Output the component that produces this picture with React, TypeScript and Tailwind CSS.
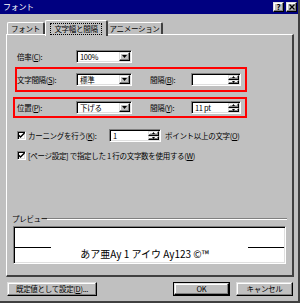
import React from "react";

const sunken =
  "border border-t-[#808080] border-l-[#808080] border-b-white border-r-white shadow-[inset_1px_1px_0_#000,inset_-1px_-1px_0_#dfdfdf]";
const raised =
  "border border-t-[#dfdfdf] border-l-[#dfdfdf] border-b-black border-r-black shadow-[inset_-1px_-1px_0_#808080,inset_1px_1px_0_#fff]";

function Arrow() {
  return (
    <svg width="5" height="3" viewBox="0 0 5 3">
      <path d="M0 0h5L2.5 3z" fill="#000" />
    </svg>
  );
}

function Dropdown({ value }: { value: string }) {
  return (
    <div className={`${sunken} bg-white flex items-center h-[13px] w-[56px]`}>
      <span className="flex-1 pl-[3px] leading-none text-black whitespace-nowrap">{value}</span>
      <div className={`${raised} bg-[#c0c0c0] w-[11px] h-[9px] mr-px flex items-center justify-center`}>
        <Arrow />
      </div>
    </div>
  );
}

function Spin({ value, w }: { value: string; w: string }) {
  return (
    <div className={`${sunken} bg-white flex items-center h-[13px] ${w}`}>
      <span className="flex-1 pl-[3px] leading-none text-black whitespace-nowrap">{value}</span>
      <div className="flex flex-col w-[11px] h-[9px] mr-px">
        <div className={`${raised} bg-[#c0c0c0] flex-1 flex items-center justify-center`}>
          <svg width="3" height="2" viewBox="0 0 3 2">
            <path d="M0 2h3L1.5 0z" fill="#000" />
          </svg>
        </div>
        <div className={`${raised} bg-[#c0c0c0] flex-1 flex items-center justify-center`}>
          <svg width="3" height="2" viewBox="0 0 3 2">
            <path d="M0 0h3L1.5 2z" fill="#000" />
          </svg>
        </div>
      </div>
    </div>
  );
}

function Check() {
  return (
    <div className={`${sunken} bg-white w-[9px] h-[9px] shrink-0 flex items-center justify-center`}>
      <svg width="7" height="7" viewBox="0 0 7 7">
        <path d="M0.5 3l2 2L6.5 1" stroke="#000" strokeWidth="1.4" fill="none" />
      </svg>
    </div>
  );
}

export default function App() {
  return (
    <div className="w-[300px] h-[303px] bg-[#c0c0c0] flex flex-col font-['Noto_Sans_CJK_JP',sans-serif] text-[7.5px] tracking-[-0.3px] text-black overflow-hidden border-r-2 border-b-2 border-r-[#404040] border-b-[#404040] whitespace-nowrap">
      {/* title bar */}
      <div className="h-[14px] bg-[#000080] flex items-center justify-between pl-[3px] pr-[1px] shrink-0">
        <span className="text-white text-[8px] leading-none">フォント</span>
        <div className="flex gap-[2px]">
          <div className={`${raised} bg-[#c0c0c0] w-[11px] h-[10px] flex items-center justify-center text-[8px] font-bold leading-none`}>?</div>
          <div className={`${raised} bg-[#c0c0c0] w-[11px] h-[10px] flex items-center justify-center`}>
            <svg width="6" height="6" viewBox="0 0 6 6">
              <path d="M0.5 0.5l5 5M5.5 0.5l-5 5" stroke="#000" strokeWidth="1.3" />
            </svg>
          </div>
        </div>
      </div>

      {/* tabs */}
      <div className="flex items-end ml-[7px] mt-[6px] h-[14px] shrink-0">
        <div className="h-[12px] w-[38px] border-t border-l border-r-2 border-t-white border-l-white border-r-[#404040] rounded-t-[2px] flex items-center justify-center leading-none">
          フォント
        </div>
        <div className="relative z-10 h-[16px] -mb-[2px] w-[63px] bg-[#c0c0c0] border-t border-l border-r-2 border-t-white border-l-white border-r-[#404040] rounded-t-[2px] flex items-start justify-center pt-[2px]">
          <span className="border border-dotted border-black px-[3px] py-[1px] leading-none">文字幅と間隔</span>
        </div>
        <div className="h-[12px] w-[55px] border-t border-r-2 border-t-white border-r-[#404040] rounded-t-[2px] flex items-center justify-center leading-none">
          アニメーション
        </div>
      </div>

      {/* panel */}
      <div className="ml-[6px] w-[288px] h-[243px] shrink-0 border-t border-l border-t-white border-l-white border-r-2 border-b-2 border-r-[#404040] border-b-[#404040] flex flex-col">
        {/* 倍率 */}
        <div className="flex items-center h-[13px] mt-[15px] ml-[10px]">
          <span className="w-[59px] leading-none">倍率(<u>C</u>):</span>
          <Dropdown value="100%" />
        </div>

        {/* red box 1 */}
        <div className="mt-[4px] ml-[8px] w-[232px] h-[25px] border-2 border-[#ff0000] flex items-center">
          <span className="w-[59px] leading-none">文字間隔(<u>S</u>):</span>
          <Dropdown value="標準" />
          <span className="ml-[18px] w-[41px] leading-none">間隔(<u>B</u>):</span>
          <Spin value="" w="w-[50px]" />
        </div>

        {/* red box 2 */}
        <div className="mt-[5px] ml-[6px] w-[234px] h-[21px] border-2 border-[#ff0000] flex items-center">
          <span className="ml-[2px] w-[59px] leading-none">位置(<u>P</u>):</span>
          <Dropdown value="下げる" />
          <span className="ml-[18px] w-[41px] leading-none">間隔(<u>Y</u>):</span>
          <Spin value="11 pt" w="w-[50px]" />
        </div>

        {/* kerning */}
        <div className="mt-[11px] ml-[10px] h-[13px] flex items-center">
          <Check />
          <span className="ml-[2px] w-[81px] leading-none">カーニングを行う(<u>K</u>):</span>
          <Spin value="1" w="w-[52px]" />
          <span className="ml-[4px] leading-none">ポイント以上の文字(<u>O</u>)</span>
        </div>

        {/* page setting */}
        <div className="mt-[8px] ml-[10px] h-[11px] flex items-center">
          <Check />
          <span className="ml-[2px] leading-none">[ページ設定] で指定した 1 行の文字数を使用する(<u>W</u>)</span>
        </div>

        {/* preview label */}
        <div className="mt-[53px] ml-[5px] h-[10px] flex items-center">
          <span className="leading-none w-[35px]">プレビュー</span>
          <div className="w-[240px] h-[2px] border-t border-t-[#808080] border-b border-b-white" />
        </div>

        {/* preview box */}
        <div className={`mt-[2px] ml-[6px] w-[273px] h-[38px] ${sunken} bg-white relative`}>
          <div className="absolute left-[1px] top-[20px] w-[36px] h-px bg-black" />
          <div className="absolute right-[1px] top-[20px] w-[36px] h-px bg-black" />
          <div className="absolute left-0 right-0 top-[22px] flex justify-center pr-[10px]">
            <span className="text-[10px] tracking-normal leading-none">あア亜Ay 1 アイウ Ay123 ©™</span>
          </div>
        </div>
      </div>

      {/* buttons */}
      <div className="mt-[5px] flex items-center h-[14px] shrink-0">
        <div className={`${raised} ml-[7px] w-[90px] h-[14px] flex items-center justify-center leading-none`}>
          既定値として設定(<u>D</u>)...
        </div>
        <div className="ml-[76px] w-[57px] h-[14px] border border-black flex">
          <div className={`${raised} flex-1 flex items-center justify-center leading-none`}>OK</div>
        </div>
        <div className={`${raised} ml-[6px] w-[57px] h-[14px] flex items-center justify-center leading-none`}>
          キャンセル
        </div>
      </div>
    </div>
  );
}
